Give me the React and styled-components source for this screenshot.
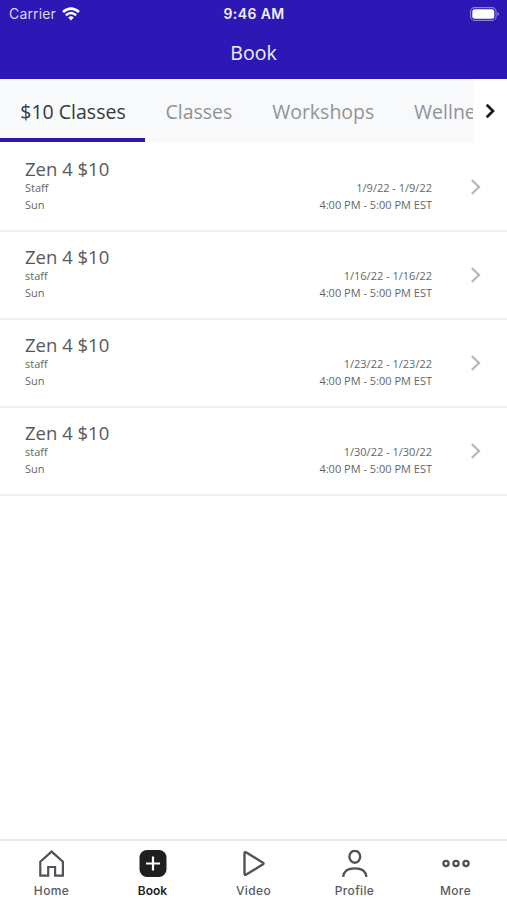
import React from "react";
import styled, { createGlobalStyle } from "styled-components";

const Global = createGlobalStyle`
  * { box-sizing: border-box; }
  body { margin: 0; background: #fff; overflow: hidden; }
  svg { display: block; flex: none; }
`;

const Screen = styled.div`
  width: 507px;
  height: 900px;
  display: flex;
  flex-direction: column;
  background: #fff;
  font-family: "Open Sans", "Noto Sans", sans-serif;
`;

const Header = styled.header`
  height: 79px;
  flex: none;
  background: #2d18b6;
  color: #f1eefc;
`;

const StatusBar = styled.div`
  height: 27px;
  padding: 0 7px 0 9px;
  display: grid;
  grid-template-columns: 1fr auto 1fr;
  align-items: center;
  font-family: Inter, sans-serif;
  font-size: 14px;
  line-height: 27px;
`;

const Carrier = styled.div`
  display: flex;
  align-items: center;
  gap: 6px;
  height: 26px;
  line-height: 26px;
  letter-spacing: 0.15px;
  color: #dcd7f6;
`;

const Clock = styled.div`
  height: 27px;
  line-height: 27px;
  font-size: 14px;
  font-weight: 600;
  letter-spacing: 0.4px;
  margin-right: 1px;
`;

const Battery = styled.div`
  display: flex;
  justify-content: flex-end;
`;

const Title = styled.h1`
  margin: 0;
  height: 52px;
  line-height: 51px;
  text-align: center;
  font-size: 19.5px;
  font-weight: 400;
`;

const TabBar = styled.nav`
  height: 65px;
  flex: none;
  display: flex;
  background: #fff;
`;

const Tabs = styled.div`
  width: 473px;
  height: 63px;
  display: flex;
  overflow: hidden;
  background: #f7f9fb;
`;

const Tab = styled.div`
  flex: none;
  height: 63px;
  padding: 0 19.5px 0 20.3px;
  line-height: 65px;
  font-size: 19.5px;
  white-space: nowrap;
  color: ${(p) => (p.$active ? "#36383b" : "#919397")};
  box-shadow: ${(p) => (p.$active ? "inset 0 -4px #2d18a8" : "none")};
`;

const ScrollNext = styled.div`
  flex: 1;
  display: flex;
  justify-content: center;
  padding-top: 24px;
`;

const List = styled.main`
  flex: 1;
`;

const Row = styled.div`
  height: 88px;
  padding: 13px 26px 0 25px;
  display: flex;
  border-bottom: 2px solid #f0f0f1;
`;

const Info = styled.div`
  flex: 1;
`;

const Name = styled.div`
  height: 21.5px;
  line-height: 24px;
  font-size: 18.5px;
  color: #57585a;
`;

const Small = styled.div`
  height: 17.5px;
  line-height: 17.5px;
  font-size: 11px;
  white-space: nowrap;
  color: #656668;
`;

const Times = styled.div`
  padding-top: 21.5px;
  margin-right: 38px;
  text-align: right;
`;

const Arrow = styled.div`
  padding-top: 22px;
`;

const BottomNav = styled.footer`
  height: 61px;
  flex: none;
  display: grid;
  grid-template-columns: repeat(5, 101px);
  justify-content: center;
  border-top: 2px solid #ebebec;
  background: #fff;
`;

const NavItem = styled.div`
  display: flex;
  flex-direction: column;
  align-items: center;
  padding-top: 9px;
  font-family: Inter, sans-serif;
  font-size: 12px;
  font-weight: ${(p) => (p.$active ? 600 : 500)};
  letter-spacing: ${(p) => (p.$active ? "0" : "0.35px")};
  line-height: 16px;
  color: ${(p) => (p.$active ? "#202123" : "#595b5f")};

  svg { margin-bottom: 5px; }
`;

const Wifi = () => (
  <svg width="18" height="14" viewBox="0 0 18 14" fill="none" stroke="#fff" strokeWidth="2.6">
    <path d="M1 5.1Q9-1.7 17 5.1M3.9 8.2Q9 3.8 14.1 8.2" />
    <path d="M6.2 10.4Q9 8 11.8 10.4L9 13.4Z" fill="#fff" stroke="none" />
  </svg>
);

const BatteryIcon = () => (
  <svg width="30" height="14" viewBox="0 0 30 14">
    <rect x="0.6" y="0.6" width="25.5" height="12.8" rx="4" fill="none" stroke="#8c80d9" strokeWidth="1.1" />
    <rect x="2.3" y="2.2" width="22" height="9.6" rx="2.5" fill="#fff" />
    <path d="M27.5 5Q29.2 6 29.2 7Q29.2 8 27.5 9Z" fill="#8c80d9" />
  </svg>
);

const NextIcon = () => (
  <svg width="10" height="16" viewBox="0 0 10 16" fill="none" stroke="#17181a" strokeWidth="2.7">
    <path d="M1.7 1.8L8 8L1.7 14.2" />
  </svg>
);

const RowArrow = () => (
  <svg width="11" height="16" viewBox="0 0 11 16" fill="none" stroke="#b7b8ba" strokeWidth="2.3">
    <path d="M1.8 1L9 8L1.8 15" />
  </svg>
);

const lineProps = {
  width: 28,
  height: 28,
  viewBox: "0 0 28 28",
  fill: "none",
  stroke: "#505257",
  strokeWidth: 2.2,
  strokeLinejoin: "round",
};

const HomeIcon = () => (
  <svg {...lineProps} strokeLinejoin="miter">
    <path d="M2.3 25.7V11.7L13.6 1.6L24.9 11.7V25.7H17.1V17H10.2V25.7Z" />
  </svg>
);

const BookIcon = () => (
  <svg width="28" height="28" viewBox="0 0 28 28">
    <rect x="0.5" y="0" width="27" height="27" rx="7.5" fill="#1e1f21" />
    <path d="M14 6.5V20.5M7 13.5H21" stroke="#fff" strokeWidth="2.2" fill="none" />
  </svg>
);

const VideoIcon = () => (
  <svg {...lineProps} strokeWidth="2.4">
    <path d="M4.5 3.4Q4.5 1.4 6.3 2.5L23 12.7Q24.1 13.5 23 14.3L6.3 24.5Q4.5 25.6 4.5 23.6Z" />
  </svg>
);

const ProfileIcon = () => (
  <svg {...lineProps} strokeWidth="2.4">
    <ellipse cx="13.8" cy="6.7" rx="5.4" ry="6" />
    <path d="M2.2 26.8C2.8 21 7 18.4 13.8 18.4S24.8 21 25.4 26.8" />
  </svg>
);

const MoreIcon = () => (
  <svg {...lineProps} strokeWidth="2.3">
    <circle cx="4" cy="13.5" r="2.6" />
    <circle cx="14" cy="13.5" r="2.6" />
    <circle cx="24" cy="13.5" r="2.6" />
  </svg>
);

const tabs = ["$10 Classes", "Classes", "Workshops", "Wellness"];

const classes = [
  { staff: "Staff", dates: "1/9/22 - 1/9/22" },
  { staff: "staff", dates: "1/16/22 - 1/16/22" },
  { staff: "staff", dates: "1/23/22 - 1/23/22" },
  { staff: "staff", dates: "1/30/22 - 1/30/22" },
];

const navItems = [
  ["Home", HomeIcon],
  ["Book", BookIcon],
  ["Video", VideoIcon],
  ["Profile", ProfileIcon],
  ["More", MoreIcon],
];

export default function App() {
  return (
    <Screen>
      <Global />
      <Header>
        <StatusBar>
          <Carrier>Carrier <Wifi /></Carrier>
          <Clock>9:46 AM</Clock>
          <Battery><BatteryIcon /></Battery>
        </StatusBar>
        <Title>Book</Title>
      </Header>
      <TabBar>
        <Tabs>
          {tabs.map((name, i) => (
            <Tab key={name} $active={i === 0}>{name}</Tab>
          ))}
        </Tabs>
        <ScrollNext><NextIcon /></ScrollNext>
      </TabBar>
      <List>
        {classes.map((c) => (
          <Row key={c.dates}>
            <Info>
              <Name>Zen 4 $10</Name>
              <Small>{c.staff}</Small>
              <Small>Sun</Small>
            </Info>
            <Times>
              <Small>{c.dates}</Small>
              <Small>4:00 PM - 5:00 PM EST</Small>
            </Times>
            <Arrow><RowArrow /></Arrow>
          </Row>
        ))}
      </List>
      <BottomNav>
        {navItems.map(([label, Icon]) => (
          <NavItem key={label} $active={label === "Book"}>
            <Icon />
            {label}
          </NavItem>
        ))}
      </BottomNav>
    </Screen>
  );
}
